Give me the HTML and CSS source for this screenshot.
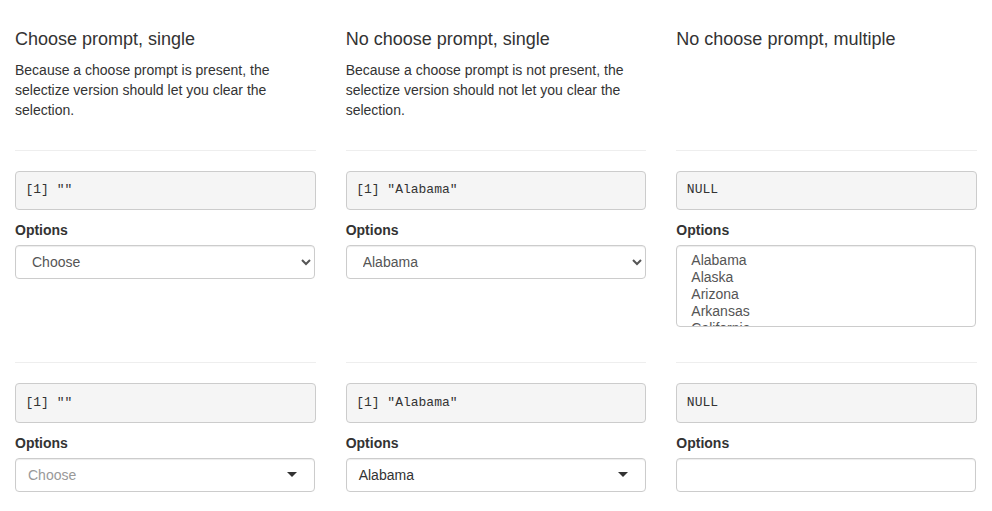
FILE: index.html
```html
<!DOCTYPE html>
<html>
<head>
<meta charset="utf-8">
<link rel="stylesheet" href="styles.css">
</head>
<body>
<div class="page">
  <div class="cell head">
    <h4>Choose prompt, single</h4>
    <p>Because a choose prompt is present, the selectize version should let you clear the selection.</p>
  </div>
  <div class="cell head">
    <h4>No choose prompt, single</h4>
    <p>Because a choose prompt is not present, the selectize version should not let you clear the selection.</p>
  </div>
  <div class="cell head">
    <h4>No choose prompt, multiple</h4>
  </div>

  <div class="cell">
    <hr>
    <pre class="out">[1] ""</pre>
    <div class="form-group">
      <label class="lbl">Options</label>
      <select class="form-control">
        <option value="">Choose</option>
        <option>Alabama</option>
        <option>Alaska</option>
      </select>
    </div>
  </div>
  <div class="cell">
    <hr>
    <pre class="out">[1] "Alabama"</pre>
    <div class="form-group">
      <label class="lbl">Options</label>
      <select class="form-control">
        <option>Alabama</option>
        <option>Alaska</option>
      </select>
    </div>
  </div>
  <div class="cell">
    <hr>
    <pre class="out">NULL</pre>
    <div class="form-group">
      <label class="lbl">Options</label>
      <select class="form-control multi" multiple size="4">
        <option>Alabama</option>
        <option>Alaska</option>
        <option>Arizona</option>
        <option>Arkansas</option>
        <option>California</option>
        <option>Colorado</option>
      </select>
    </div>
  </div>

  <div class="cell">
    <hr>
    <pre class="out">[1] ""</pre>
    <div class="form-group">
      <label class="lbl">Options</label>
      <div class="sel-input single"><span class="placeholder">Choose</span></div>
    </div>
  </div>
  <div class="cell">
    <hr>
    <pre class="out">[1] "Alabama"</pre>
    <div class="form-group">
      <label class="lbl">Options</label>
      <div class="sel-input single"><span class="item">Alabama</span></div>
    </div>
  </div>
  <div class="cell">
    <hr>
    <pre class="out">NULL</pre>
    <div class="form-group">
      <label class="lbl">Options</label>
      <div class="sel-input"></div>
    </div>
  </div>
</div>
</body>
</html>
```

FILE: styles.css
```css
* { box-sizing: border-box; }
html, body { margin: 0; padding: 0; background: #fff; }
body {
  font-family: "Liberation Sans", Arial, sans-serif;
  font-size: 14px;
  line-height: 1.42857143;
  color: #333;
}
.page {
  display: grid;
  grid-template-columns: repeat(3, 1fr);
  column-gap: 30px;
  padding: 30px 15px 0;
}
.cell { min-width: 0; }
h4 {
  font-size: 18px;
  font-weight: 500;
  line-height: 1.1;
  margin: 0 0 10px;
}
p { margin: 0 0 10px; }
hr {
  margin: 20px 0;
  border: 0;
  border-top: 1px solid #eee;
  height: 0;
}
.out {
  display: block;
  margin: 0 0 10px;
  padding: 9.5px;
  font-family: "Liberation Mono", "Courier New", monospace;
  font-size: 13px;
  line-height: 1.42857143;
  color: #333;
  background: #f5f5f5;
  border: 1px solid #ccc;
  border-radius: 4px;
  white-space: pre;
}
.form-group { margin-bottom: 15px; width: 300px; max-width: 100%; }
.lbl {
  display: block;
  font-weight: 700;
  margin-bottom: 5px;
}
.form-control {
  display: block;
  width: 100%;
  height: 34px;
  padding: 6px 12px;
  font-family: "Liberation Sans", Arial, sans-serif;
  font-size: 14px;
  line-height: 1.42857143;
  color: #555;
  background: #fff;
  border: 1px solid #ccc;
  border-radius: 4px;
  box-shadow: inset 0 1px 1px rgba(0,0,0,.075);
}
.form-control.multi {
  height: 82px;
  overflow-y: hidden;
}
.sel-input {
  position: relative;
  height: 34px;
  padding: 6px 12px;
  border: 1px solid #ccc;
  border-radius: 4px;
  background: #fff;
  box-shadow: inset 0 1px 1px rgba(0,0,0,.075);
  line-height: 20px;
  color: #333;
}
.sel-input.single::after {
  content: "";
  position: absolute;
  top: 50%;
  right: 17px;
  margin-top: -3px;
  width: 0;
  height: 0;
  border-style: solid;
  border-width: 5px 5px 0 5px;
  border-color: #333 transparent transparent transparent;
}
.placeholder { color: #999; }
.item { color: #333; }
```
